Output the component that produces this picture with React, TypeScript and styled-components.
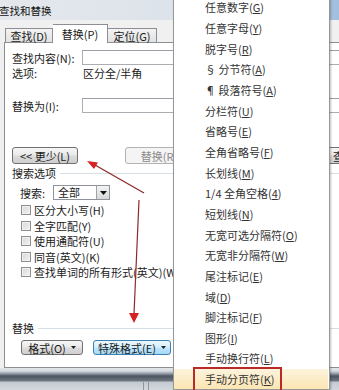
import React from 'react';
import styled, { createGlobalStyle, css } from 'styled-components';

const Global = createGlobalStyle`
  html, body { margin: 0; padding: 0; }
  body {
    width: 339px; height: 390px; overflow: hidden; background: #f0f0f0;
    font-family: "Noto Sans CJK SC", "Noto Sans", sans-serif;
  }
`;

const Screen = styled.div`
  position: relative;
  width: 339px;
  height: 390px;
  overflow: hidden;
  display: flex;
  flex-direction: column;
  font-family: "Noto Sans CJK SC", "Noto Sans", sans-serif;
  font-size: 11px;
  color: #1a1a1a;
`;

const TitleBar = styled.div`
  flex: none;
  height: 20px;
  display: flex;
  align-items: center;
  background: linear-gradient(90deg, #e4e8ed 0%, #dde3ea 50%, #bccfe3 82%, #a2bfdf 100%);
  font-size: 10.5px;
  color: #111;
  span { margin-left: -1px; }
`;

const Body = styled.div`
  flex: none;
  height: 348px;
  background: #f0f0f0;
  padding: 4px 0 0 4px;
  display: flex;
  flex-direction: column;
  box-sizing: border-box;
`;

const TabRow = styled.div`
  flex: none;
  height: 18px;
  display: flex;
  align-items: flex-end;
  padding-left: 1px;
  position: relative;
  z-index: 1;
`;

const Tab = styled.div<{ $w: number; $active?: boolean }>`
  width: ${p => p.$w}px;
  box-sizing: border-box;
  display: flex;
  align-items: center;
  justify-content: center;
  border: 1px solid #8c8e94;
  border-bottom: none;
  ${p => p.$active
    ? css`
        height: 19px;
        margin-bottom: -1px;
        background: #fff;
      `
    : css`
        height: 14px;
        background: linear-gradient(#f3f3f3, #e2e2e2);
        & + & { border-left: none; }
      `}
`;

const Panel = styled.div`
  flex: 1;
  width: 420px;
  flex-shrink: 0;
  background: #fff;
  border: 1px solid #8c8e94;
  border-right: none;
  box-sizing: border-box;
  padding-left: 7px;
  display: flex;
  flex-direction: column;
`;

const Row = styled.div<{ $mt: number; $h: number }>`
  flex: none;
  display: flex;
  align-items: center;
  margin-top: ${p => p.$mt}px;
  height: ${p => p.$h}px;
  white-space: nowrap;
`;

const Label = styled.div<{ $w?: number; $ml?: number }>`
  flex: none;
  width: ${p => (p.$w ? `${p.$w}px` : 'auto')};
  margin-left: ${p => p.$ml || 0}px;
  line-height: 14px;
`;

const TextBox = styled.div`
  flex: 1;
  height: 15px;
  box-sizing: border-box;
  border: 1px solid #abadb3;
  border-top-color: #9a9ea6;
  border-right: none;
  background: #fff;
`;

const Button = styled.div<{ $w: number; $ml?: number; $disabled?: boolean; $hot?: boolean; $left?: boolean }>`
  flex: none;
  width: ${p => p.$w}px;
  margin-left: ${p => p.$ml || 0}px;
  height: 100%;
  box-sizing: border-box;
  border: 1px solid #707070;
  border-radius: 3px;
  display: flex;
  align-items: center;
  justify-content: ${p => (p.$left ? 'flex-start' : 'center')};
  padding-left: ${p => (p.$left ? 9 : 0)}px;
  gap: 5px;
  background: linear-gradient(#f6f6f6 0%, #e9e9e9 48%, #dcdcdc 52%, #cfcfcf 100%);
  color: #1a1a1a;
  ${p => p.$disabled && css`
    border-color: #b0b4b8;
    background: #f4f4f4;
    color: #8a8a8a;
  `}
  ${p => p.$hot && css`
    border-color: #3c7fb1;
    background: linear-gradient(#eaf6fd 0%, #d9f0fc 48%, #bee6fd 52%, #a7d9f5 100%);
  `}
`;

const GroupTitle = styled.div<{ $mt: number }>`
  flex: none;
  display: flex;
  align-items: center;
  gap: 4px;
  margin-top: ${p => p.$mt}px;
  height: 14px;
  &::after {
    content: '';
    flex: 1;
    height: 1px;
    background: #d5dfe5;
  }
`;

const Select = styled.div`
  flex: none;
  width: 57px;
  height: 15px;
  box-sizing: border-box;
  border: 1px solid #8f949c;
  display: flex;
  align-items: stretch;
  background: #fff;
`;

const SelectText = styled.div`
  flex: 1;
  padding-left: 4px;
  line-height: 13px;
`;

const SelectDrop = styled.div`
  width: 12px;
  flex: none;
  border-left: 1px solid #a0a4aa;
  background: linear-gradient(#f3f3f3, #d8d8d8);
  display: flex;
  align-items: center;
  justify-content: center;
`;

const CheckList = styled.div`
  flex: none;
  margin-top: 2.5px;
  display: flex;
  flex-direction: column;
`;

const CheckRow = styled.div`
  height: 15.5px;
  display: flex;
  align-items: center;
  padding-left: 9px;
  gap: 3px;
  white-space: nowrap;
`;

const Box = styled.div`
  width: 10px;
  height: 10px;
  flex: none;
  box-sizing: border-box;
  border: 1px solid #8e8f8f;
  background: linear-gradient(135deg, #d6d6d6, #f4f4f4);
  box-shadow: inset 0 0 0 1px #f0f0f0;
`;

const BottomStrip = styled.div`
  flex: 1;
  background: linear-gradient(#e2e6eb 0px, #d7dce2 3px, #8a929c 6px, #4c5561 8px, #6e7781 13px, #c4cad1 14px, #d3d8de 22px);
  position: relative;
`;

const StripDivider = styled.div<{ $x: number }>`
  position: absolute;
  top: 14px;
  bottom: 0;
  left: ${p => p.$x}px;
  width: 1px;
  background: #8d959e;
`;

const Menu = styled.div`
  position: absolute;
  left: 173px;
  top: -4px;
  width: 157px;
  box-sizing: border-box;
  border: 1px solid #979797;
  background: #fff;
  box-shadow: 1px 1px 2px rgba(0, 0, 0, 0.25);
  z-index: 5;
  font-size: 11px;
  color: #333;
`;

const MenuItem = styled.div<{ $hl?: boolean }>`
  position: relative;
  height: 20.67px;
  display: flex;
  align-items: center;
  padding-left: 31px;
  white-space: nowrap;
  u { text-decoration: underline; text-underline-offset: 1px; }
  ${p => p.$hl && css`
    background: linear-gradient(#fdf3dc, #fbe5b3);
    margin-right: 1px;
  `}
`;

const RedFrame = styled.div`
  position: absolute;
  left: 19px;
  top: -2px;
  width: 89px;
  height: 26px;
  box-sizing: border-box;
  border: 2.5px solid #b82a26;
`;

const Arrows = styled.svg`
  position: absolute;
  left: 0;
  top: 0;
  width: 339px;
  height: 390px;
  pointer-events: none;
  z-index: 6;
`;

const Caret = () => (
  <svg width="5" height="3" viewBox="0 0 5 3"><path d="M0 0h5L2.5 3z" fill="#222" /></svg>
);

const items: Array<[string, string, string]> = [
  ['任意数字(', 'G', ')'],
  ['任意字母(', 'Y', ')'],
  ['脱字号(', 'R', ')'],
  ['§ 分节符(', 'A', ')'],
  ['¶ 段落符号(', 'A', ')'],
  ['分栏符(', 'U', ')'],
  ['省略号(', 'E', ')'],
  ['全角省略号(', 'F', ')'],
  ['长划线(', 'M', ')'],
  ['1/4 全角空格(', '4', ')'],
  ['短划线(', 'N', ')'],
  ['无宽可选分隔符(', 'O', ')'],
  ['无宽非分隔符(', 'W', ')'],
  ['尾注标记(', 'E', ')'],
  ['域(', 'D', ')'],
  ['脚注标记(', 'F', ')'],
  ['图形(', 'I', ')'],
  ['手动换行符(', 'L', ')'],
  ['手动分页符(', 'K', ')'],
];

const checks = ['区分大小写(H)', '全字匹配(Y)', '使用通配符(U)', '同音(英文)(K)', '查找单词的所有形式(英文)(W)'];

export default function App() {
  return (
    <>
      <Global />
      <Screen>
        <TitleBar><span>查找和替换</span></TitleBar>
        <Body>
          <TabRow>
            <Tab $w={48}>查找(D)</Tab>
            <Tab $w={55} $active>替换(P)</Tab>
            <Tab $w={49}>定位(G)</Tab>
          </TabRow>
          <Panel>
            <Row $mt={7} $h={15}>
              <Label $w={70}>查找内容(N):</Label>
              <TextBox />
            </Row>
            <Row $mt={1} $h={14}>
              <Label $w={71}>选项:</Label>
              <Label>区分全/半角</Label>
            </Row>
            <Row $mt={18} $h={15}>
              <Label $w={70}>替换为(I):</Label>
              <TextBox />
            </Row>
            <Row $mt={34} $h={17}>
              <Button $w={66}>&lt;&lt; 更少(L)</Button>
              <Button $w={68} $ml={47} $disabled>替换(R)</Button>
              <Button $w={118} $ml={6} />
              <Button $w={82} $ml={6} $left>查找下一处(F)</Button>
            </Row>
            <GroupTitle $mt={2}>搜索选项</GroupTitle>
            <Row $mt={5} $h={15}>
              <Label $w={33} $ml={8}>搜索:</Label>
              <Select>
                <SelectText>全部</SelectText>
                <SelectDrop>
                  <svg width="7" height="4" viewBox="0 0 7 4"><path d="M0 0h7L3.5 4z" fill="#111" /></svg>
                </SelectDrop>
              </Select>
            </Row>
            <CheckList>
              {checks.map(c => (
                <CheckRow key={c}><Box />{c}</CheckRow>
              ))}
            </CheckList>
            <GroupTitle $mt={41}>替换</GroupTitle>
            <Row $mt={5} $h={15}>
              <Button $w={62} $ml={9}>格式(O) <Caret /></Button>
              <Button $w={78} $ml={10} $hot>特殊格式(E) <Caret /></Button>
            </Row>
          </Panel>
        </Body>
        <BottomStrip>
          <StripDivider $x={143} />
          <StripDivider $x={148} />
        </BottomStrip>

        <Menu>
          {items.map(([a, k, b], i) => (
            <MenuItem key={i} $hl={i === items.length - 1}>
              {a}<u>{k}</u>{b}
              {i === items.length - 1 && <RedFrame />}
            </MenuItem>
          ))}
        </Menu>

        <Arrows viewBox="0 0 339 390">
          <line x1="144" y1="193" x2="95" y2="165" stroke="#8a2b2b" strokeWidth="1.2" />
          <polygon points="87,161 98,162.5 94,169" fill="#d42222" />
          <line x1="139" y1="200" x2="134" y2="314" stroke="#8a2b2b" strokeWidth="1.2" />
          <polygon points="134,323 129,313 139,313" fill="#d42222" />
        </Arrows>
      </Screen>
    </>
  );
}
